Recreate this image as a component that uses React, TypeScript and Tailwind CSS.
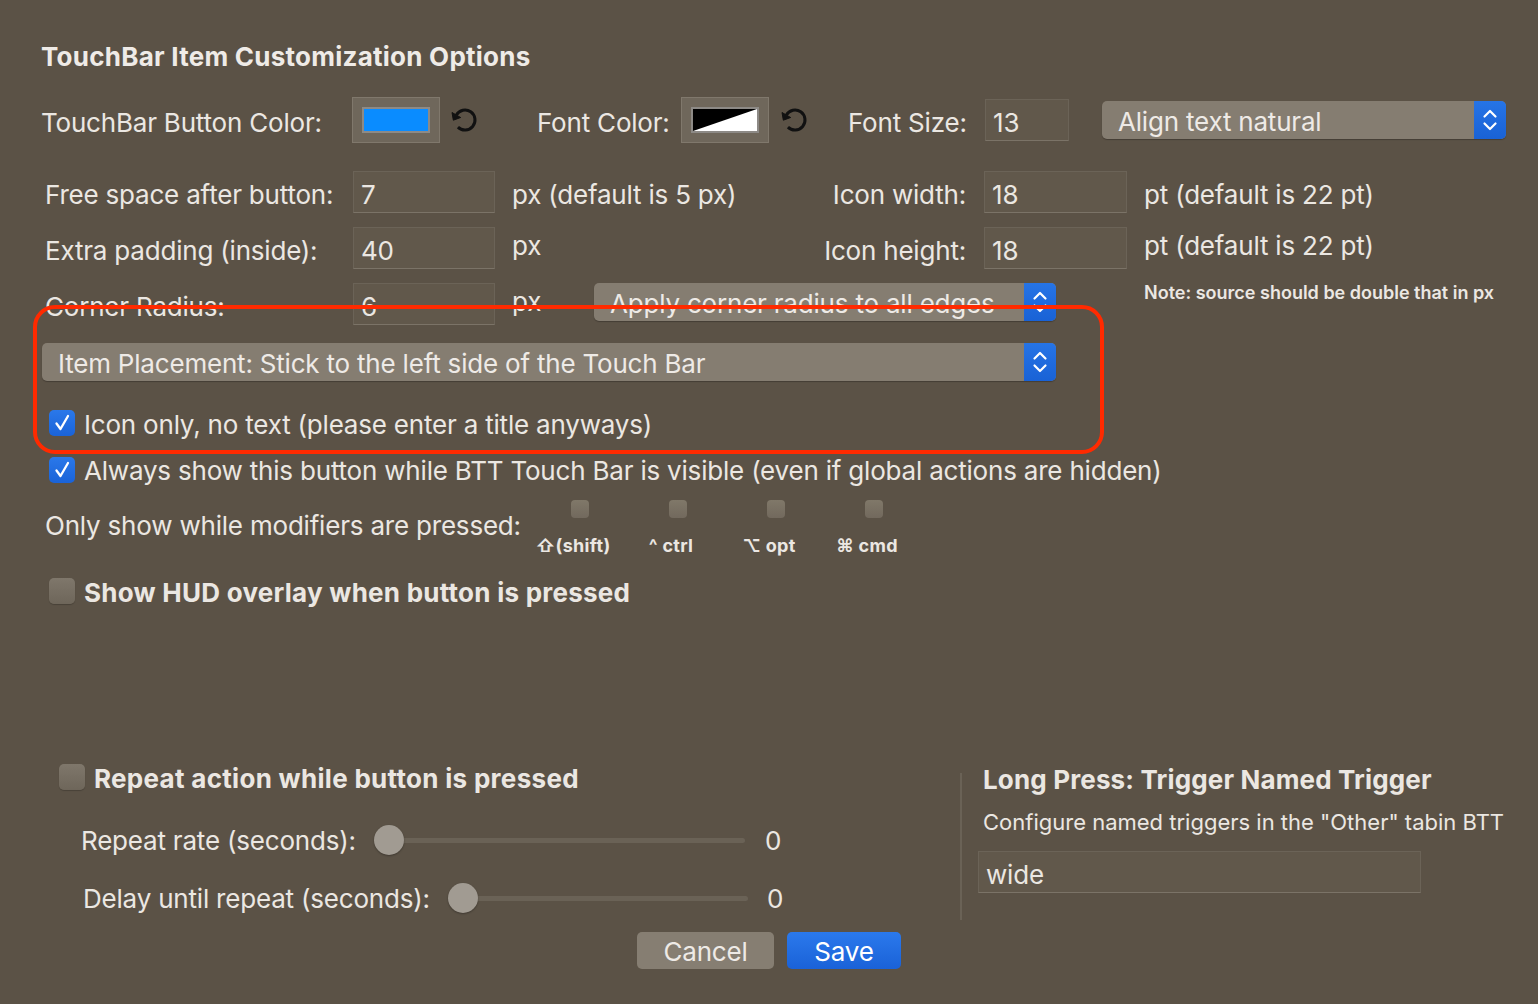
import React from "react";

// Inter sits a little high compared to the mac system font, so text gets a small top pad
const L = ({
  children,
  className = "",
  pad = "pt-[5px]",
}: {
  children: React.ReactNode;
  className?: string;
  pad?: string;
}) => <span className={`${pad} whitespace-nowrap ${className}`}>{children}</span>;

const Field = ({ value, className }: { value: string; className: string }) => (
  <div
    className={`h-[42px] flex items-center pl-[7px] pt-[5px] bg-[#61584b] border border-[#6b6357] border-b-[#7b7367] text-[26px] ${className}`}
  >
    {value}
  </div>
);

const Chevrons = () => (
  <svg width="32" height="38" viewBox="0 0 32 38" fill="none">
    <path d="M10.5 15.5l5.5-5.5 5.5 5.5" stroke="white" strokeWidth="2.2" strokeLinecap="round" strokeLinejoin="round" />
    <path d="M10.5 22.5l5.5 5.5 5.5-5.5" stroke="white" strokeWidth="2.2" strokeLinecap="round" strokeLinejoin="round" />
  </svg>
);

const Popup = ({ label, className }: { label: string; className: string }) => (
  <div className={`h-[38px] flex rounded-[5px] bg-[#857d71] shadow-[0_1px_1px_rgba(0,0,0,0.25)] ${className}`}>
    <div className="flex-1 flex items-center pl-[16px] pt-[4px] text-[26px] text-[#eeeae6] overflow-hidden whitespace-nowrap">
      {label}
    </div>
    <div className="w-[32px] h-[38px] rounded-r-[5px] bg-gradient-to-b from-[#2674e6] to-[#1962d6] flex items-center justify-center">
      <Chevrons />
    </div>
  </div>
);

const ResetIcon = () => (
  <svg width="28" height="28" viewBox="0 0 28 28" fill="none">
    <path d="M7.93 21.07A10 10 0 1 0 6.34 9" stroke="#111" strokeWidth="3" />
    <path d="M10.67 11.5L2.01 6.5L3.34 14.2Z" fill="#111" stroke="#111" strokeWidth="1" strokeLinejoin="round" />
  </svg>
);

const ColorWell = ({ children }: { children: React.ReactNode }) => (
  <div className="w-[88px] h-[46px] bg-[#6f675b] border border-[#80786c] flex items-center justify-center">
    <div className="w-[68px] h-[26px] border-2 border-[#8d8a86] overflow-hidden">{children}</div>
  </div>
);

const Check = ({ on }: { on: boolean }) =>
  on ? (
    <div className="w-[26px] h-[26px] rounded-[5px] bg-gradient-to-b from-[#2a78ea] to-[#1a63d8] flex items-center justify-center shrink-0">
      <svg width="22" height="22" viewBox="0 0 22 22" fill="none">
        <path d="M5.5 11.5l4 5.5L17 4" stroke="white" strokeWidth="2.3" strokeLinecap="round" strokeLinejoin="round" />
      </svg>
    </div>
  ) : (
    <div className="w-[26px] h-[26px] rounded-[5px] bg-gradient-to-b from-[#7f776b] to-[#6e665a] shadow-[0_1px_1px_rgba(0,0,0,0.2)] shrink-0" />
  );

const Slider = ({ className }: { className: string }) => (
  <div className={`relative h-[32px] flex items-center ${className}`}>
    <div className="ml-[15px] flex-1 h-[5px] rounded-full bg-[#6a6256]" />
    <div className="absolute left-0 top-[1px] w-[30px] h-[30px] rounded-full bg-[#a19b92] shadow-[0_1px_2px_rgba(0,0,0,0.3)]" />
  </div>
);

const modifiers = ["⇧(shift)", "^ ctrl", "⌥ opt", "⌘ cmd"];

export default function App() {
  return (
    <div className="relative w-[1538px] h-[1004px] overflow-hidden bg-[#5b5246] text-[#ebe7e2] font-['Inter',sans-serif] text-[26px] leading-none tracking-[-0.2px]">
      {/* top section */}
      <div className="pt-[41px]">
        <div className="pl-[41px] h-[32px] flex items-center font-bold text-[#efebe7] tracking-[0.25px]">
          TouchBar Item Customization Options
        </div>

        <div className="mt-[24px] pl-[41px] h-[46px] flex items-center">
          <L className="w-[311px]">TouchBar Button Color:</L>
          <ColorWell>
            <div className="w-full h-full bg-[#0a8cff]" />
          </ColorWell>
          <div className="ml-[10px] w-[28px]">
            <ResetIcon />
          </div>
          <L className="ml-[59px] w-[144px]">Font Color:</L>
          <ColorWell>
            <svg width="64" height="22" viewBox="0 0 64 22" preserveAspectRatio="none">
              <rect width="64" height="22" fill="white" />
              <path d="M0 0H64L0 22Z" fill="black" />
            </svg>
          </ColorWell>
          <div className="ml-[11px] w-[28px]">
            <ResetIcon />
          </div>
          <L className="ml-[40px] w-[137px]">Font Size:</L>
          <Field value="13" className="w-[84px]" />
          <Popup label="Align text natural" className="ml-[33px] w-[404px]" />
        </div>

        <div className="mt-[28px] pl-[45px] h-[42px] flex items-center">
          <L className="w-[308px]">Free space after button:</L>
          <Field value="7" className="w-[142px]" />
          <div className="w-[489px] flex items-center justify-between pl-[17px] pr-[18px]">
            <L>px (default is 5 px)</L>
            <L>Icon width:</L>
          </div>
          <Field value="18" className="w-[143px]" />
          <L className="ml-[17px]">pt (default is 22 pt)</L>
        </div>

        <div className="mt-[14px] pl-[45px] h-[42px] flex items-center">
          <L className="w-[308px]">Extra padding (inside):</L>
          <Field value="40" className="w-[142px]" />
          <div className="w-[489px] flex items-center justify-between pl-[17px] pr-[18px]">
            <span className="-mt-[4px]">px</span>
            <L>Icon height:</L>
          </div>
          <Field value="18" className="w-[143px]" />
          <span className="ml-[17px] -mt-[4px]">pt (default is 22 pt)</span>
        </div>

        <div className="mt-[14px] pl-[45px] h-[42px] flex items-center">
          <L className="w-[308px]">Corner Radius:</L>
          <Field value="6" className="w-[142px]" />
          <span className="w-[99px] pl-[17px] -mt-[4px]">px</span>
          <Popup label="Apply corner radius to all edges" className="self-start w-[462px]" />
          <div className="ml-[88px] self-start mt-[1px] text-[18px] font-semibold tracking-[0px]">
            Note: source should be double that in px
          </div>
        </div>

        <Popup label="Item Placement: Stick to the left side of the Touch Bar" className="mt-[18px] ml-[42px] w-[1014px]" />

        <div className="mt-[29px] pl-[49px] h-[26px] flex items-center gap-[9px]">
          <Check on />
          <L pad="pt-[3px]">Icon only, no text (please enter a title anyways)</L>
        </div>

        <div className="mt-[21px] pl-[49px] h-[26px] flex items-center gap-[9px]">
          <Check on />
          <L pad="pt-[1px]">Always show this button while BTT Touch Bar is visible (even if global actions are hidden)</L>
        </div>

        <div className="mt-[17px] pl-[45px] h-[56px] flex">
          <div className="w-[479px] pt-[13px]">Only show while modifiers are pressed:</div>
          {modifiers.map((m) => (
            <div key={m} className="w-[98px] flex flex-col items-center">
              <div className="ml-[13px] w-[18px] h-[18px] rounded-[4px] bg-gradient-to-b from-[#807869] to-[#72695d]" />
              <div className="mt-[19px] text-[18px] font-bold tracking-[0.3px] whitespace-nowrap">{m}</div>
            </div>
          ))}
        </div>

        <div className="mt-[22px] pl-[49px] h-[26px] flex items-center gap-[9px]">
          <Check on={false} />
          <L pad="pt-[3px]" className="font-bold tracking-[0.25px]">
            Show HUD overlay when button is pressed
          </L>
        </div>
      </div>

      {/* bottom section */}
      <div className="mt-[160px] flex">
        <div className="w-[960px] pl-[59px]">
          <div className="h-[26px] flex items-center gap-[9px]">
            <Check on={false} />
            <L pad="pt-[3px]" className="font-bold tracking-[0.3px]">
              Repeat action while button is pressed
            </L>
          </div>
          <div className="mt-[34px] pl-[22px] h-[32px] flex items-center">
            <L pad="pt-[1px]" className="w-[293px]">Repeat rate (seconds):</L>
            <Slider className="w-[371px]" />
            <L pad="pt-[1px]" className="ml-[20px]">0</L>
          </div>
          <div className="mt-[26px] pl-[24px] h-[32px] flex items-center">
            <L pad="pt-[1px]" className="w-[365px]">Delay until repeat (seconds):</L>
            <Slider className="w-[300px]" />
            <L pad="pt-[1px]" className="ml-[19px]">0</L>
          </div>
        </div>
        <div className="mt-[9px] w-[2px] h-[147px] bg-[#6a6256]" />
        <div className="pl-[21px]">
          <div className="h-[30px] flex items-center pt-[1px] font-bold tracking-[0.15px]">Long Press: Trigger Named Trigger</div>
          <div className="mt-[17px] text-[22px] tracking-[0px]">Configure named triggers in the "Other" tabin BTT</div>
          <Field value="wide" className="mt-[18px] -ml-[5px] w-[443px]" />
        </div>
      </div>

      <div className="mt-[12px] flex justify-center gap-[13px]">
        <div className="w-[137px] h-[37px] pt-[3px] rounded-[5px] bg-[#867e72] flex items-center justify-center text-[#eeeae6]">
          Cancel
        </div>
        <div className="w-[114px] h-[37px] pt-[3px] rounded-[5px] bg-gradient-to-b from-[#2b79ec] to-[#1a62d8] flex items-center justify-center text-white">
          Save
        </div>
      </div>

      {/* red annotation */}
      <div className="absolute left-[33px] top-[305px] w-[1071px] h-[149px] rounded-[22px] border-[4px] border-[#ff2a00] pointer-events-none" />
    </div>
  );
}
